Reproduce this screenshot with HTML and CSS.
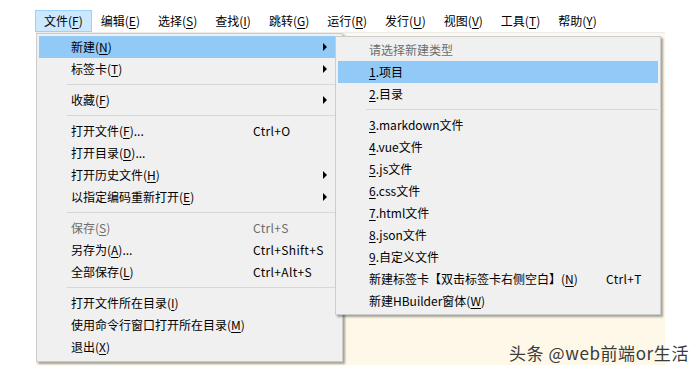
FILE: index.html
```html
<!DOCTYPE html>
<html lang="zh">
<head>
<meta charset="utf-8">
<link rel="stylesheet" href="styles.css">
</head>
<body>
<div class="page">
  <div class="menubar">
    <div class="mb-item active">文件(<u>F</u>)</div>
    <div class="mb-item">编辑(<u>E</u>)</div>
    <div class="mb-item">选择(<u>S</u>)</div>
    <div class="mb-item">查找(<u>I</u>)</div>
    <div class="mb-item">跳转(<u>G</u>)</div>
    <div class="mb-item">运行(<u>R</u>)</div>
    <div class="mb-item">发行(<u>U</u>)</div>
    <div class="mb-item">视图(<u>V</u>)</div>
    <div class="mb-item">工具(<u>T</u>)</div>
    <div class="mb-item">帮助(<u>Y</u>)</div>
  </div>
  <div class="editor"></div>

  <div class="menu main-menu">
    <div class="item hl"><span>新建(<u>N</u>)</span><span></span><span class="arrow"></span></div>
    <div class="item"><span>标签卡(<u>T</u>)</span><span></span><span class="arrow"></span></div>
    <div class="sep"></div>
    <div class="item"><span>收藏(<u>F</u>)</span><span></span><span class="arrow"></span></div>
    <div class="sep"></div>
    <div class="item"><span>打开文件(<u>F</u>)...</span><span class="key">Ctrl+O</span><span></span></div>
    <div class="item"><span>打开目录(<u>D</u>)...</span><span></span><span></span></div>
    <div class="item"><span>打开历史文件(<u>H</u>)</span><span></span><span class="arrow"></span></div>
    <div class="item"><span>以指定编码重新打开(<u>E</u>)</span><span></span><span class="arrow"></span></div>
    <div class="sep"></div>
    <div class="item disabled"><span>保存(<u>S</u>)</span><span class="key">Ctrl+S</span><span></span></div>
    <div class="item"><span>另存为(<u>A</u>)...</span><span class="key">Ctrl+Shift+S</span><span></span></div>
    <div class="item"><span>全部保存(<u>L</u>)</span><span class="key">Ctrl+Alt+S</span><span></span></div>
    <div class="sep"></div>
    <div class="item"><span>打开文件所在目录(<u>I</u>)</span><span></span><span></span></div>
    <div class="item"><span>使用命令行窗口打开所在目录(<u>M</u>)</span><span></span><span></span></div>
    <div class="item"><span>退出(<u>X</u>)</span><span></span><span></span></div>
  </div>

  <div class="menu sub-menu">
    <div class="item disabled"><span>请选择新建类型</span><span></span></div>
    <div class="item hl"><span><u>1</u>.项目</span><span></span></div>
    <div class="item"><span><u>2</u>.目录</span><span></span></div>
    <div class="sep"></div>
    <div class="item"><span><u>3</u>.markdown文件</span><span></span></div>
    <div class="item"><span><u>4</u>.vue文件</span><span></span></div>
    <div class="item"><span><u>5</u>.js文件</span><span></span></div>
    <div class="item"><span><u>6</u>.css文件</span><span></span></div>
    <div class="item"><span><u>7</u>.html文件</span><span></span></div>
    <div class="item"><span><u>8</u>.json文件</span><span></span></div>
    <div class="item"><span><u>9</u>.自定义文件</span><span></span></div>
    <div class="item"><span>新建标签卡【双击标签卡右侧空白】(<u>N</u>)</span><span class="key">Ctrl+T</span></div>
    <div class="item"><span>新建HBuilder窗体(<u>W</u>)</span><span></span></div>
  </div>

  <div class="watermark">头条 @web前端or生活</div>
</div>
</body>
</html>
```
FILE: styles.css
```css
* { box-sizing: border-box; }
html, body {
  margin: 0;
  padding: 0;
  background: #ffffff;
}
.page {
  position: relative;
  width: 700px;
  height: 375px;
  overflow: hidden;
  font-family: "Noto Sans CJK SC", "Noto Sans", sans-serif;
  font-size: 12px;
  color: #000;
}
u {
  text-decoration: underline;
  text-underline-offset: 2px;
  text-decoration-thickness: 1px;
}
.menubar {
  display: flex;
  margin-left: 35px;
  padding-top: 10px;
  height: 32px;
}
.mb-item {
  height: 22px;
  line-height: 20px;
  padding: 0 8px;
  border: 1px solid transparent;
  white-space: nowrap;
}
.mb-item.active {
  background: #cce8ff;
  border-color: #99d1ff;
}
.editor {
  margin-left: 36px;
  width: 629px;
  height: 333px;
  background: #fdf8e7;
  border-top: 1px solid #ececec;
}
.menu {
  position: absolute;
  background: #f0f0f0;
  border: 1px solid #cccccc;
  padding: 2px;
}
.main-menu {
  left: 36px;
  top: 33px;
  width: 307px;
  height: 329px;
  box-shadow: 2px 2px 2px rgba(0,0,0,0.35);
}
.sub-menu {
  left: 335px;
  top: 36px;
  width: 326px;
  height: 279px;
  box-shadow: 2px 2px 2px rgba(0,0,0,0.35);
}
.item {
  display: grid;
  height: 22px;
  line-height: 22px;
  white-space: nowrap;
  align-items: center;
}
.main-menu .item {
  grid-template-columns: 182px 1fr 17px;
  padding-left: 32px;
}
.sub-menu .item {
  grid-template-columns: 237px 1fr;
  padding-left: 31px;
}
.key { letter-spacing: 0.35px; }
.item.hl { background: #91c9f7; }
.item.disabled { color: #6d6d6d; }
.arrow {
  width: 0;
  height: 0;
  border-top: 4px solid transparent;
  border-bottom: 4px solid transparent;
  border-left: 4px solid #000;
}
.sep {
  height: 9px;
  display: flex;
  align-items: center;
}
.sep::after {
  content: "";
  display: block;
  height: 1px;
  width: 100%;
  background: #d7d7d7;
}
.main-menu .sep { padding-left: 28px; padding-right: 1px; }
.sub-menu .sep { padding-left: 28px; padding-right: 0; }
.watermark {
  position: absolute;
  right: 11px;
  bottom: 10px;
  font-size: 17px;
  color: #3a3a3a;
  letter-spacing: 0.6px;
  white-space: nowrap;
}
```
